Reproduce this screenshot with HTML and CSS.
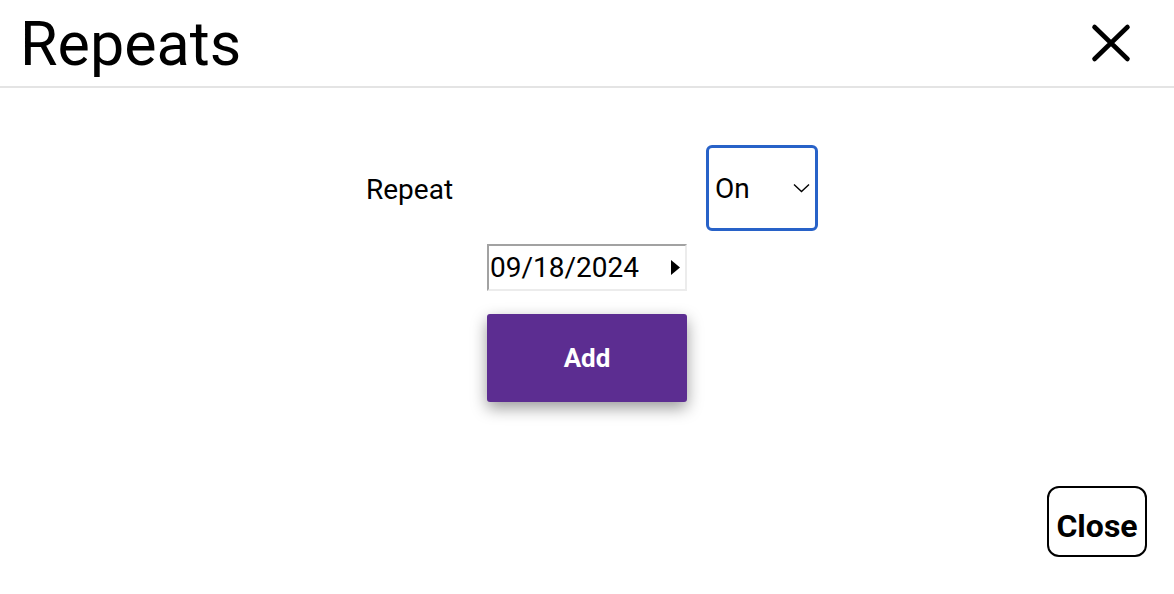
FILE: index.html
```html
<!DOCTYPE html>
<html lang="en">
<head>
<meta charset="utf-8">
<title>Repeats</title>
<link rel="stylesheet" href="styles.css">
</head>
<body>
<div class="dialog">
  <header class="header">
    <h1 class="title">Repeats</h1>
    <button class="icon-close" aria-label="Close">
      <svg width="44" height="44" viewBox="0 0 44 44"><path d="M5.5 6 L38.5 38 M38.5 6 L5.5 38" stroke="#000" stroke-width="4.6" stroke-linecap="round" fill="none"/></svg>
    </button>
  </header>
  <main class="body">
    <div class="row">
      <label class="label">Repeat</label>
      <div class="select">
        <span class="select-value">On</span>
        <svg class="chev" width="17" height="10" viewBox="0 0 17 10"><path d="M1 1.5 L8.5 8.5 L16 1.5" stroke="#000" stroke-width="1.4" fill="none"/></svg>
      </div>
    </div>
    <div class="date">
      <span class="date-value">09/18/2024</span>
      <svg class="tri" width="9" height="15" viewBox="0 0 9 15"><path d="M0 0 L9 7.5 L0 15 Z" fill="#000"/></svg>
    </div>
    <button class="add">Add</button>
  </main>
  <footer class="footer">
    <button class="close-btn">Close</button>
  </footer>
</div>
</body>
</html>
```
FILE: styles.css
```css
* { box-sizing: border-box; }
html, body { margin: 0; padding: 0; background: #fff; }
body {
  font-family: Roboto, "Liberation Sans", Arial, sans-serif;
  color: #000;
  width: 1174px;
  height: 594px;
  overflow: hidden;
}
.dialog { display: flex; flex-direction: column; height: 594px; }
.header {
  display: flex;
  align-items: center;
  justify-content: space-between;
  height: 88px;
  border-bottom: 2px solid #e4e4e4;
  padding: 0 41px 0 20px;
}
.title {
  margin: 0;
  font-size: 61px;
  font-weight: 400;
  line-height: 68px;
  padding-top: 2px;
}
.icon-close {
  border: 0;
  background: none;
  padding: 0;
  width: 44px;
  height: 44px;
  display: flex;
}
.body {
  display: flex;
  flex-direction: column;
  align-items: center;
  padding-top: 57px;
  flex: 1;
}
.row {
  width: 462px;
  display: flex;
  align-items: center;
  justify-content: space-between;
}
.label {
  font-size: 28px;
  padding-left: 10px;
  padding-top: 2px;
}
.select {
  width: 112px;
  height: 86px;
  border: 3px solid #2862c8;
  border-radius: 6px;
  display: flex;
  align-items: center;
  justify-content: space-between;
  padding: 0 5px 0 6px;
  font-size: 28px;
}
.chev { margin-top: -1px; }
.date {
  margin-top: 13px;
  width: 200px;
  height: 47px;
  border-style: solid;
  border-width: 2px;
  border-color: #a2a2a2 #ececec #ececec #a2a2a2;
  display: flex;
  align-items: center;
  justify-content: space-between;
  padding: 0 5px 0 1px;
  font-size: 28px;
}
.tri { margin-top: -1px; }
.add {
  margin-top: 23px;
  width: 200px;
  height: 88px;
  border: 0;
  border-radius: 3px;
  background: #5c2d91;
  color: #fff;
  font-family: Roboto, "Liberation Sans", Arial, sans-serif;
  font-weight: 700;
  font-size: 26px;
  box-shadow: 0 6px 16px rgba(0, 0, 0, 0.4);
}
.footer {
  display: flex;
  justify-content: flex-end;
  padding: 0 27px 37px 0;
}
.close-btn {
  width: 100px;
  height: 71px;
  border: 2px solid #000;
  border-radius: 12px;
  background: #fff;
  color: #000;
  font-family: Roboto, "Liberation Sans", Arial, sans-serif;
  font-weight: 700;
  font-size: 32px;
  padding: 8px 0 0 0;
}
```
